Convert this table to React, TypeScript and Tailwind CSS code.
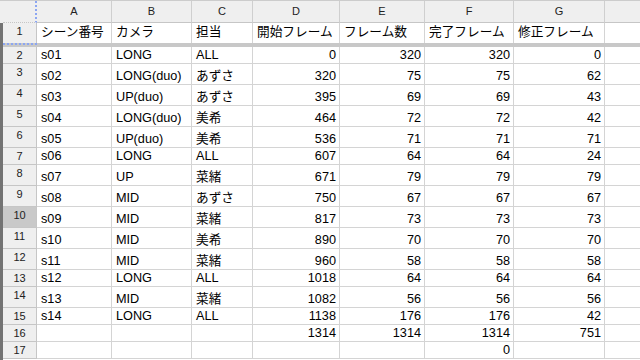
import React from "react";

const font = "font-['Liberation_Sans','Noto_Sans_CJK_JP',sans-serif]";

const columns = [
  { key: "A", width: "w-[75px]", right: false },
  { key: "B", width: "w-[80px]", right: false },
  { key: "C", width: "w-[61px]", right: false },
  { key: "D", width: "w-[87px]", right: true },
  { key: "E", width: "w-[85px]", right: true },
  { key: "F", width: "w-[89px]", right: true },
  { key: "G", width: "w-[91px]", right: true },
];

const header = ["シーン番号", "カメラ", "担当", "開始フレーム", "フレーム数", "完了フレーム", "修正フレーム"];

// [cells..., tall row]
const rows: { cells: string[]; tall: boolean }[] = [
  { cells: ["s01", "LONG", "ALL", "0", "320", "320", "0"], tall: false },
  { cells: ["s02", "LONG(duo)", "あずさ", "320", "75", "75", "62"], tall: true },
  { cells: ["s03", "UP(duo)", "あずさ", "395", "69", "69", "43"], tall: true },
  { cells: ["s04", "LONG(duo)", "美希", "464", "72", "72", "42"], tall: true },
  { cells: ["s05", "UP(duo)", "美希", "536", "71", "71", "71"], tall: true },
  { cells: ["s06", "LONG", "ALL", "607", "64", "64", "24"], tall: false },
  { cells: ["s07", "UP", "菜緒", "671", "79", "79", "79"], tall: true },
  { cells: ["s08", "MID", "あずさ", "750", "67", "67", "67"], tall: true },
  { cells: ["s09", "MID", "菜緒", "817", "73", "73", "73"], tall: true },
  { cells: ["s10", "MID", "美希", "890", "70", "70", "70"], tall: true },
  { cells: ["s11", "MID", "菜緒", "960", "58", "58", "58"], tall: true },
  { cells: ["s12", "LONG", "ALL", "1018", "64", "64", "64"], tall: false },
  { cells: ["s13", "MID", "菜緒", "1082", "56", "56", "56"], tall: true },
  { cells: ["s14", "LONG", "ALL", "1138", "176", "176", "42"], tall: false },
  { cells: ["", "", "", "1314", "1314", "1314", "751"], tall: false },
  { cells: ["", "", "", "", "", "0", ""], tall: false },
];

function RowHeader({ n, active }: { n: number; active?: boolean }) {
  return (
    <div
      className={`w-[34px] shrink-0 border-r border-b border-[#c6c6c6] flex justify-center pt-[2px] text-[11px] leading-[13px] text-[#222] ${
        active ? "bg-[#c9c9c9]" : "bg-[#efefef]"
      }`}
    >
      {n}
    </div>
  );
}

export default function App() {
  return (
    <div className={`w-[640px] h-[360px] overflow-hidden bg-white flex ${font}`}>
      <div className="w-[3px] shrink-0 flex flex-col">
        <div className="h-[23px] bg-[#efefef] border-t border-[#cccccc]" />
        <div className="flex-1 bg-[#737373]" />
      </div>

      <div className="flex-1 flex flex-col min-w-0">
        {/* column letters */}
        <div className="h-[23px] flex shrink-0 border-t border-[#cccccc] bg-[#efefef]">
          <div className="w-[34px] shrink-0 border-b border-[#c6c6c6] border-r-2 border-r-[#8ca6f2] border-dotted" />
          {columns.map((c) => (
            <div
              key={c.key}
              className={`${c.width} shrink-0 border-r border-b border-[#cfcfcf] border-b-[#c6c6c6] flex items-center justify-center text-[11px] text-[#222]`}
            >
              {c.key}
            </div>
          ))}
          <div className="flex-1 border-b border-[#c6c6c6]" />
        </div>

        {/* row 1 */}
        <div className="h-[20px] flex shrink-0">
          <div className="w-[34px] shrink-0 border-r border-[#c6c6c6] bg-[#efefef] flex justify-center pt-[2px] text-[11px] leading-[13px] text-[#222]">
            1
          </div>
          {columns.map((c, i) => (
            <div
              key={c.key}
              className={`${c.width} shrink-0 border-r border-[#d4d4d4] flex items-end pl-[4px] pb-[3px] text-[12.7px] text-black whitespace-nowrap overflow-hidden`}
            >
              <span className="leading-[15px]">{header[i]}</span>
            </div>
          ))}
          <div className="flex-1" />
        </div>

        {/* frozen divider */}
        <div className="h-[4px] flex shrink-0 bg-[#c8c8c8]">
          <div className="w-[34px] shrink-0 border-t-2 border-dotted border-[#8ca6f2]" />
        </div>

        {rows.map((r, ri) => (
          <div key={ri} className={`flex shrink-0 ${r.tall ? "h-[21px]" : "h-[17px]"}`}>
            <RowHeader n={ri + 2} active={ri + 2 === 10} />
            {columns.map((c, ci) => (
              <div
                key={c.key}
                className={`${c.width} shrink-0 border-r border-b border-[#d4d4d4] flex items-end text-[12.7px] text-black whitespace-nowrap overflow-hidden ${
                  c.right ? "justify-end pr-[3px]" : "pl-[4px]"
                }`}
              >
                <span className="leading-[15px]">{r.cells[ci]}</span>
              </div>
            ))}
            <div className="flex-1 border-b border-[#d4d4d4]" />
          </div>
        ))}
      </div>
    </div>
  );
}
